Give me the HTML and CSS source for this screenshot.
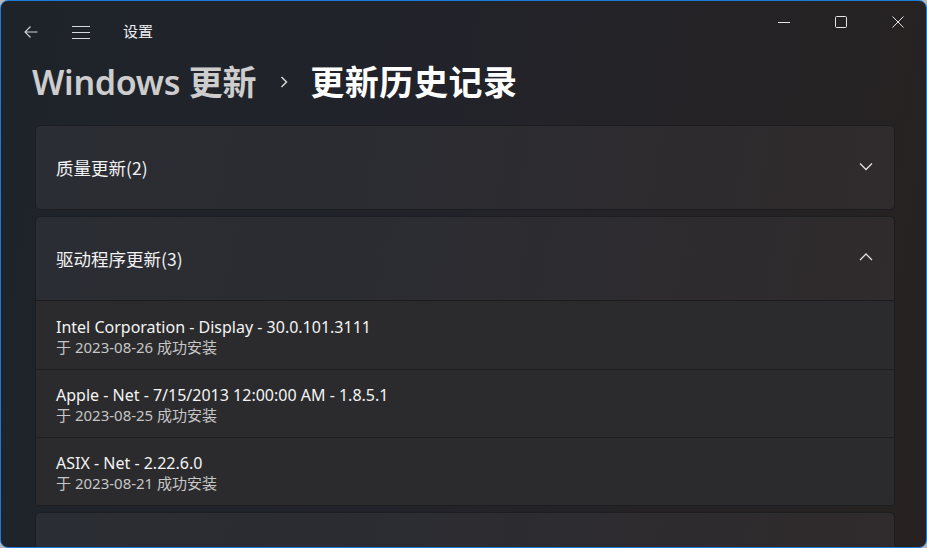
FILE: index.html
```html
<!DOCTYPE html>
<html lang="zh-CN">
<head>
<meta charset="utf-8">
<title>设置</title>
<link rel="stylesheet" href="styles.css">
</head>
<body>
<div class="window">
  <div class="titlebar">
    <button class="tb-btn back" aria-label="返回">
      <svg width="16" height="16" viewBox="0 0 16 16"><path d="M14.5 8H2M7.5 2.5L2 8l5.5 5.5" fill="none" stroke="#cfd1d4" stroke-width="1.1"/></svg>
    </button>
    <button class="tb-btn menu" aria-label="菜单">
      <svg width="18" height="14" viewBox="0 0 18 14"><path d="M0 1.5h18M0 7.5h18M0 13.5h18" fill="none" stroke="#d8d9db" stroke-width="1.1"/></svg>
    </button>
    <span class="app-title">设置</span>
    <div class="caption">
      <span class="cap-btn"><svg width="12" height="12" viewBox="0 0 12 12"><path d="M0 6.5h12" stroke="#e6e6e6" stroke-width="1"/></svg></span>
      <span class="cap-btn"><svg width="12" height="12" viewBox="0 0 12 12"><rect x="0.5" y="0.5" width="11" height="11" rx="1.2" fill="none" stroke="#e6e6e6" stroke-width="1"/></svg></span>
      <span class="cap-btn"><svg width="12" height="12" viewBox="0 0 12 12"><path d="M0.5 0.5l11 11M11.5 0.5l-11 11" stroke="#e6e6e6" stroke-width="1"/></svg></span>
    </div>
  </div>

  <h1 class="breadcrumb">
    <span class="crumb-parent">Windows 更新</span>
    <span class="crumb-sep"><svg width="10" height="14" viewBox="0 0 10 14"><path d="M2.5 2L7.5 7l-5 5" fill="none" stroke="#d6d6d6" stroke-width="1.5"/></svg></span>
    <span class="crumb-current">更新历史记录</span>
  </h1>

  <div class="content">
    <div class="card">
      <div class="card-header">
        <span class="card-title">质量更新(2)</span>
        <svg class="chev" width="14" height="10" viewBox="0 0 14 10"><path d="M1 2.5l6 6 6-6" fill="none" stroke="#e2e2e2" stroke-width="1.3"/></svg>
      </div>
    </div>

    <div class="card expanded">
      <div class="card-header">
        <span class="card-title">驱动程序更新(3)</span>
        <svg class="chev" width="14" height="10" viewBox="0 0 14 10"><path d="M1 8l6-6 6 6" fill="none" stroke="#e2e2e2" stroke-width="1.3"/></svg>
      </div>
      <div class="card-body">
        <div class="row">
          <div class="row-title">Intel Corporation - Display - 30.0.101.3111</div>
          <div class="row-sub">于 2023-08-26 成功安装</div>
        </div>
        <div class="row">
          <div class="row-title">Apple - Net - 7/15/2013 12:00:00 AM - 1.8.5.1</div>
          <div class="row-sub">于 2023-08-25 成功安装</div>
        </div>
        <div class="row">
          <div class="row-title">ASIX - Net - 2.22.6.0</div>
          <div class="row-sub">于 2023-08-21 成功安装</div>
        </div>
      </div>
    </div>

    <div class="card">
      <div class="card-header"></div>
    </div>
  </div>
</div>
</body>
</html>
```

FILE: styles.css
```css
* { box-sizing: border-box; }
html, body {
  margin: 0;
  padding: 0;
  background: #b9b9b9;
}
body {
  font-family: "Noto Sans", "Noto Sans CJK SC", sans-serif;
  color: #ffffff;
}
.window {
  width: 927px;
  height: 548px;
  border: 1px solid #1a7bd9;
  border-radius: 8px;
  overflow: hidden;
  background: linear-gradient(100deg, #1e232a 0%, #22232a 45%, #272221 100%);
  display: flex;
  flex-direction: column;
}
.titlebar {
  height: 54px;
  display: flex;
  align-items: flex-start;
  flex-shrink: 0;
}
.tb-btn {
  background: none;
  border: 0;
  padding: 0;
  display: flex;
  align-items: center;
  justify-content: center;
}
.back {
  margin: 23px 0 0 22px;
  width: 16px;
  height: 16px;
}
.menu {
  margin: 24px 0 0 33px;
  width: 18px;
  height: 14px;
}
.app-title {
  margin: 19px 0 0 33px;
  font-size: 15px;
  line-height: 22px;
  color: #f0f0f0;
  font-family: "Noto Sans CJK SC", sans-serif;
}
.caption {
  margin-left: auto;
  display: flex;
}
.cap-btn {
  width: 57px;
  height: 40px;
  display: flex;
  align-items: center;
  justify-content: center;
  padding-top: 1px;
}
.breadcrumb {
  margin: -2px 0 0;
  padding-left: 31px;
  height: 54px;
  display: flex;
  align-items: center;
  font-size: 34px;
  font-weight: 600;
  flex-shrink: 0;
  font-family: "Noto Sans", "Noto Sans CJK SC", sans-serif;
}
.crumb-parent { color: #cdcdce; letter-spacing: -0.3px; }
.crumb-sep {
  display: flex;
  margin: 3px 21px 0 23px;
}
.crumb-current { color: #ffffff; letter-spacing: 0.6px; }
.content {
  padding: 18px 31px 0 34px;
  display: flex;
  flex-direction: column;
  gap: 6px;
}
.card {
  background: linear-gradient(100deg, #2a2d33 0%, #2c2c31 50%, #302b2c 100%);
  border: 1px solid #1c1d21;
  border-radius: 5px;
  overflow: hidden;
  flex-shrink: 0;
}
.card-header {
  height: 83px;
  display: flex;
  align-items: center;
  padding: 0 21px 0 20px;
  justify-content: space-between;
}
.card-title {
  font-size: 17.5px;
  color: #f2f2f2;
  font-family: "Noto Sans CJK SC", sans-serif;
}
.chev { margin-top: -3px; }
.card-body {
  border-top: 1px solid #1b1b1d;
}
.row {
  height: 68px;
  padding: 14px 20px 0;
  background: #2b2b2d;
  border-top: 1px solid #1f1f21;
}
.row:first-child { border-top: 0; height: 68px; padding-top: 15px; }
.row-title {
  font-size: 16px;
  line-height: 22px;
  color: #f4f4f4;
}
.row-sub {
  font-size: 15px;
  line-height: 18px;
  color: #c6c6c6;
}
```
